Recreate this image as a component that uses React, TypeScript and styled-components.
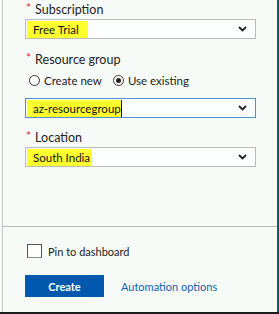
import styled, { createGlobalStyle } from 'styled-components';

const GlobalStyle = createGlobalStyle`
  html, body {
    margin: 0;
    padding: 0;
    background: #f6fbf8;
  }
  body {
    font-family: Lato, 'Noto Sans', sans-serif;
    font-size: 12.5px;
    color: #222;
  }
`;

const Screen = styled.div`
  width: 279px;
  height: 314px;
  box-sizing: border-box;
  padding-left: 2px;
  border-bottom: 2px solid #1b1b1b;
  display: flex;
  background: #f6fbf8;
`;

const Panel = styled.div`
  flex: 1;
  display: flex;
  flex-direction: column;
  border-left: 1px solid #c4c6c5;
  border-right: 2px solid #1f4f7d;
`;

const Form = styled.div`
  flex: 1;
  padding: 2px 21px 0 22px;
  display: flex;
  flex-direction: column;
`;

const Label = styled.div<{ $top?: number }>`
  height: 16px;
  line-height: 16px;
  margin-top: ${({ $top }) => $top ?? 0}px;
  margin-bottom: 1px;
  display: flex;
  align-items: center;
  gap: 4px;
  white-space: nowrap;
`;

const Star = styled.span`
  color: #e5262b;
  font-size: 12px;
  position: relative;
  top: -2px;
  padding-left: 1px;
`;

const Select = styled.div<{ $focused?: boolean; $top?: number }>`
  height: 20px;
  box-sizing: border-box;
  margin-top: ${({ $top }) => $top ?? 0}px;
  border: 1px solid ${({ $focused }) => ($focused ? '#4f8fcf' : '#b9bbba')};
  background: #fbfefd;
  display: flex;
  align-items: center;
  padding: 0 8px 0 1px;
  justify-content: space-between;
`;

const Value = styled.span<{ $cursor?: boolean; $padRight: number }>`
  background: #ffff2e;
  height: 17px;
  line-height: 17px;
  font-size: 11.5px;
  padding: 0 ${({ $padRight }) => $padRight}px 0 6px;
  white-space: nowrap;
  color: #111;
  border-right: ${({ $cursor }) => ($cursor ? '1px solid #111' : 'none')};
`;

const Chevron = () => (
  <svg width="9" height="6" viewBox="0 0 9 6">
    <path d="M1 1 L4.5 4.5 L8 1" fill="none" stroke="#222" strokeWidth="1.8" />
  </svg>
);

const RadioRow = styled.div`
  height: 16px;
  margin-top: 3px;
  display: flex;
  align-items: center;
  padding-left: 4px;
  gap: 11px;
  font-size: 11.5px;
`;

const RadioOption = styled.label`
  display: flex;
  align-items: center;
  gap: 4px;
  white-space: nowrap;
`;

const RadioCircle = styled.span<{ $checked?: boolean }>`
  width: 11px;
  height: 11px;
  box-sizing: border-box;
  border-radius: 50%;
  border: 1px solid #333;
  background: #fff;
  display: flex;
  align-items: center;
  justify-content: center;
  &::after {
    content: '';
    width: 5px;
    height: 5px;
    border-radius: 50%;
    background: ${({ $checked }) => ($checked ? '#222' : 'transparent')};
  }
`;

const Footer = styled.div`
  height: 86px;
  box-sizing: border-box;
  border-top: 1px solid #b7b9b8;
  padding: 17px 0 0 22px;
  display: flex;
  flex-direction: column;
  gap: 17px;
  font-size: 11px;
`;

const CheckRow = styled.label`
  display: flex;
  align-items: center;
  gap: 6px;
  height: 14px;
  padding-left: 2px;
`;

const CheckBox = styled.span`
  width: 15px;
  height: 14px;
  box-sizing: border-box;
  border: 1px solid #555;
  border-bottom-color: #888;
  background: #fff;
`;

const Actions = styled.div`
  display: flex;
  align-items: center;
  gap: 17px;
`;

const CreateButton = styled.button`
  width: 79px;
  height: 22px;
  border: none;
  background: #0158ad;
  color: #fff;
  font-family: inherit;
  font-size: 11px;
  font-weight: 700;
  padding: 0;
`;

const LinkText = styled.span`
  color: #0f5fb2;
`;

export default function App() {
  return (
    <>
      <GlobalStyle />
      <Screen>
        <Panel>
          <Form>
            <Label>
              <Star>*</Star>Subscription
            </Label>
            <Select>
              <Value $padRight={9}>Free Trial</Value>
              <Chevron />
            </Select>

            <Label $top={13}>
              <Star>*</Star>Resource group
            </Label>
            <RadioRow>
              <RadioOption>
                <RadioCircle />
                Create new
              </RadioOption>
              <RadioOption>
                <RadioCircle $checked />
                Use existing
              </RadioOption>
            </RadioRow>
            <Select $focused $top={10}>
              <Value $cursor $padRight={0}>az-resourcegroup</Value>
              <Chevron />
            </Select>

            <Label $top={12}>
              <Star>*</Star>Location
            </Label>
            <Select>
              <Value $padRight={2}>South India</Value>
              <Chevron />
            </Select>
          </Form>
          <Footer>
            <CheckRow>
              <CheckBox />
              Pin to dashboard
            </CheckRow>
            <Actions>
              <CreateButton>Create</CreateButton>
              <LinkText>Automation options</LinkText>
            </Actions>
          </Footer>
        </Panel>
      </Screen>
    </>
  );
}
